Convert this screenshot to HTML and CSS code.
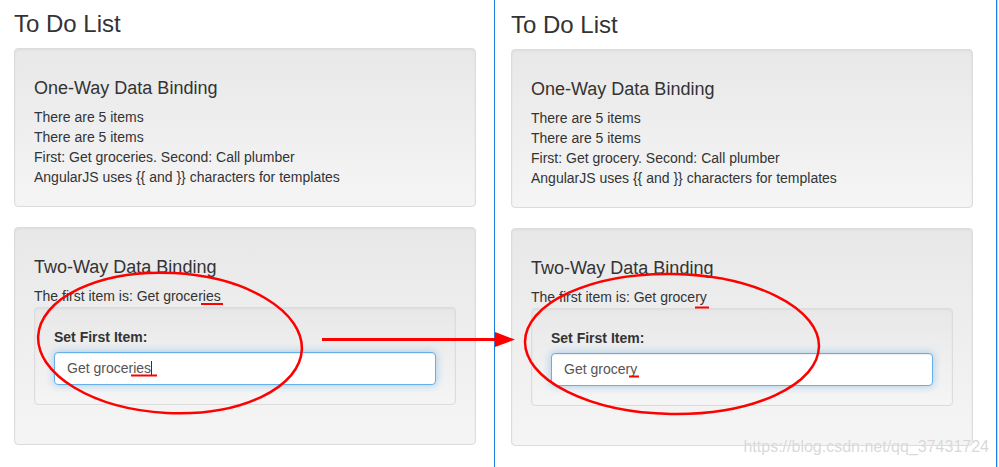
FILE: index.html
```html
<!DOCTYPE html>
<html lang="en">
<head>
    <meta charset="UTF-8">
    <meta name="viewport" content="width=device-width, initial-scale=1.0">
    <title>To Do List</title>
    <link rel="stylesheet" href="styles.css">
</head>
<body>
    <div id="shot">
        <div class="pane pane-before">
            <h3 class="title">To Do List</h3>
            <div class="well">
                <h4 class="well-title">One-Way Data Binding</h4>
                <div class="line">There are 5 items</div>
                <div class="line">There are 5 items</div>
                <div class="line">First: Get groceries. Second: Call plumber</div>
                <div class="line">AngularJS uses {{ and }} characters for templates</div>
            </div>
            <div class="well">
                <h4 class="well-title">Two-Way Data Binding</h4>
                <div class="line">The first item is: Get groceries</div>
                <div class="well inner">
                    <label class="field-label">Set First Item:</label>
                    <input class="form-control" type="text" value="Get groceries">
                </div>
            </div>
        </div>
        <div class="pane pane-after">
            <h3 class="title">To Do List</h3>
            <div class="well">
                <h4 class="well-title">One-Way Data Binding</h4>
                <div class="line">There are 5 items</div>
                <div class="line">There are 5 items</div>
                <div class="line">First: Get grocery. Second: Call plumber</div>
                <div class="line">AngularJS uses {{ and }} characters for templates</div>
            </div>
            <div class="well">
                <h4 class="well-title">Two-Way Data Binding</h4>
                <div class="line">The first item is: Get grocery</div>
                <div class="well inner">
                    <label class="field-label">Set First Item:</label>
                    <input class="form-control" type="text" value="Get grocery">
                </div>
            </div>
        </div>
        <div class="edge"></div>

        <!-- red pen marks drawn over the screenshot -->
        <svg class="marks" width="999" height="467" viewBox="0 0 999 467">
            <ellipse cx="170" cy="343" rx="132" ry="70" transform="rotate(3 170 343)" fill="none" stroke="#f00" stroke-width="2.5"/>
            <ellipse cx="672" cy="344" rx="147" ry="70" transform="rotate(1 672 344)" fill="none" stroke="#f00" stroke-width="2.5"/>
            <line x1="322" y1="339.5" x2="498" y2="339.5" stroke="#f00" stroke-width="3"/>
            <polygon points="495,332 515,339.5 495,347" fill="#f00"/>
            <line x1="201" y1="304" x2="223" y2="304" stroke="#f00" stroke-width="2"/>
            <line x1="131" y1="375.5" x2="157" y2="375.5" stroke="#f00" stroke-width="2"/>
            <line x1="695" y1="307.5" x2="709" y2="307.5" stroke="#f00" stroke-width="2"/>
            <line x1="629" y1="376.5" x2="639" y2="376.5" stroke="#f00" stroke-width="2"/>
            <line x1="151.5" y1="361" x2="151.5" y2="375" stroke="#333" stroke-width="1"/>
        </svg>
        <span class="watermark">https://blog.csdn.net/qq_37431724</span>
    </div>
</body>
</html>
```

FILE: styles.css
```css
body{
    margin: 0;
    font-family: "Liberation Sans", Arial, Helvetica, sans-serif;
    font-size: 14px;
    line-height: 20px;
    color: #333;
    background: #fff;
}
#shot{
    position: relative;
    display: flex;
    width: 999px;
    height: 467px;
    overflow: hidden;
}
.pane{
    box-sizing: border-box;
    height: 467px;
    border-right: 1px solid #1a7fe0;
}
.pane-before{
    width: 495px;
    padding: 0 18px 0 14px;
}
.pane-after{
    width: 502px;
    padding: 1px 23px 0 16px;
}
.edge{
    width: 1px;
    height: 467px;
    background: #d8d8d8;
}
.title{
    margin: 11px 0 11px;
    font-size: 24px;
    font-weight: normal;
    line-height: 26px;
}
.well{
    min-height: 20px;
    padding: 19px;
    margin-bottom: 20px;
    border: 1px solid #dcdcdc;
    border-radius: 4px;
    background-image: linear-gradient(to bottom, #e8e8e8 0, #f5f5f5 100%);
    box-shadow: inset 0 1px 3px rgba(0,0,0,.05), 0 1px 0 rgba(255,255,255,.1);
}
.well-title{
    margin: 11px 0 8px;
    font-size: 18px;
    font-weight: normal;
    line-height: 19.8px;
}
.inner{
    margin-top: 1px;
}
.field-label{
    display: block;
    margin-bottom: 5px;
    font-weight: bold;
}
.form-control{
    display: block;
    box-sizing: border-box;
    width: 100%;
    height: 33px;
    padding: 6px 12px;
    font-family: inherit;
    font-size: 14px;
    color: #555;
    background: #fff;
    border: 1px solid #66afe9;
    border-radius: 4px;
    outline: 0;
    box-shadow: inset 0 1px 1px rgba(0,0,0,.075), 0 0 8px rgba(102,175,233,.6);
}
.marks{
    position: absolute;
    left: 0;
    top: 0;
    pointer-events: none;
}
.watermark{
    position: absolute;
    right: 10px;
    top: 437px;
    font-size: 16px;
    line-height: 20px;
    color: rgba(200,200,200,.7);
    text-shadow: 0 0 1px #fff;
}
```
